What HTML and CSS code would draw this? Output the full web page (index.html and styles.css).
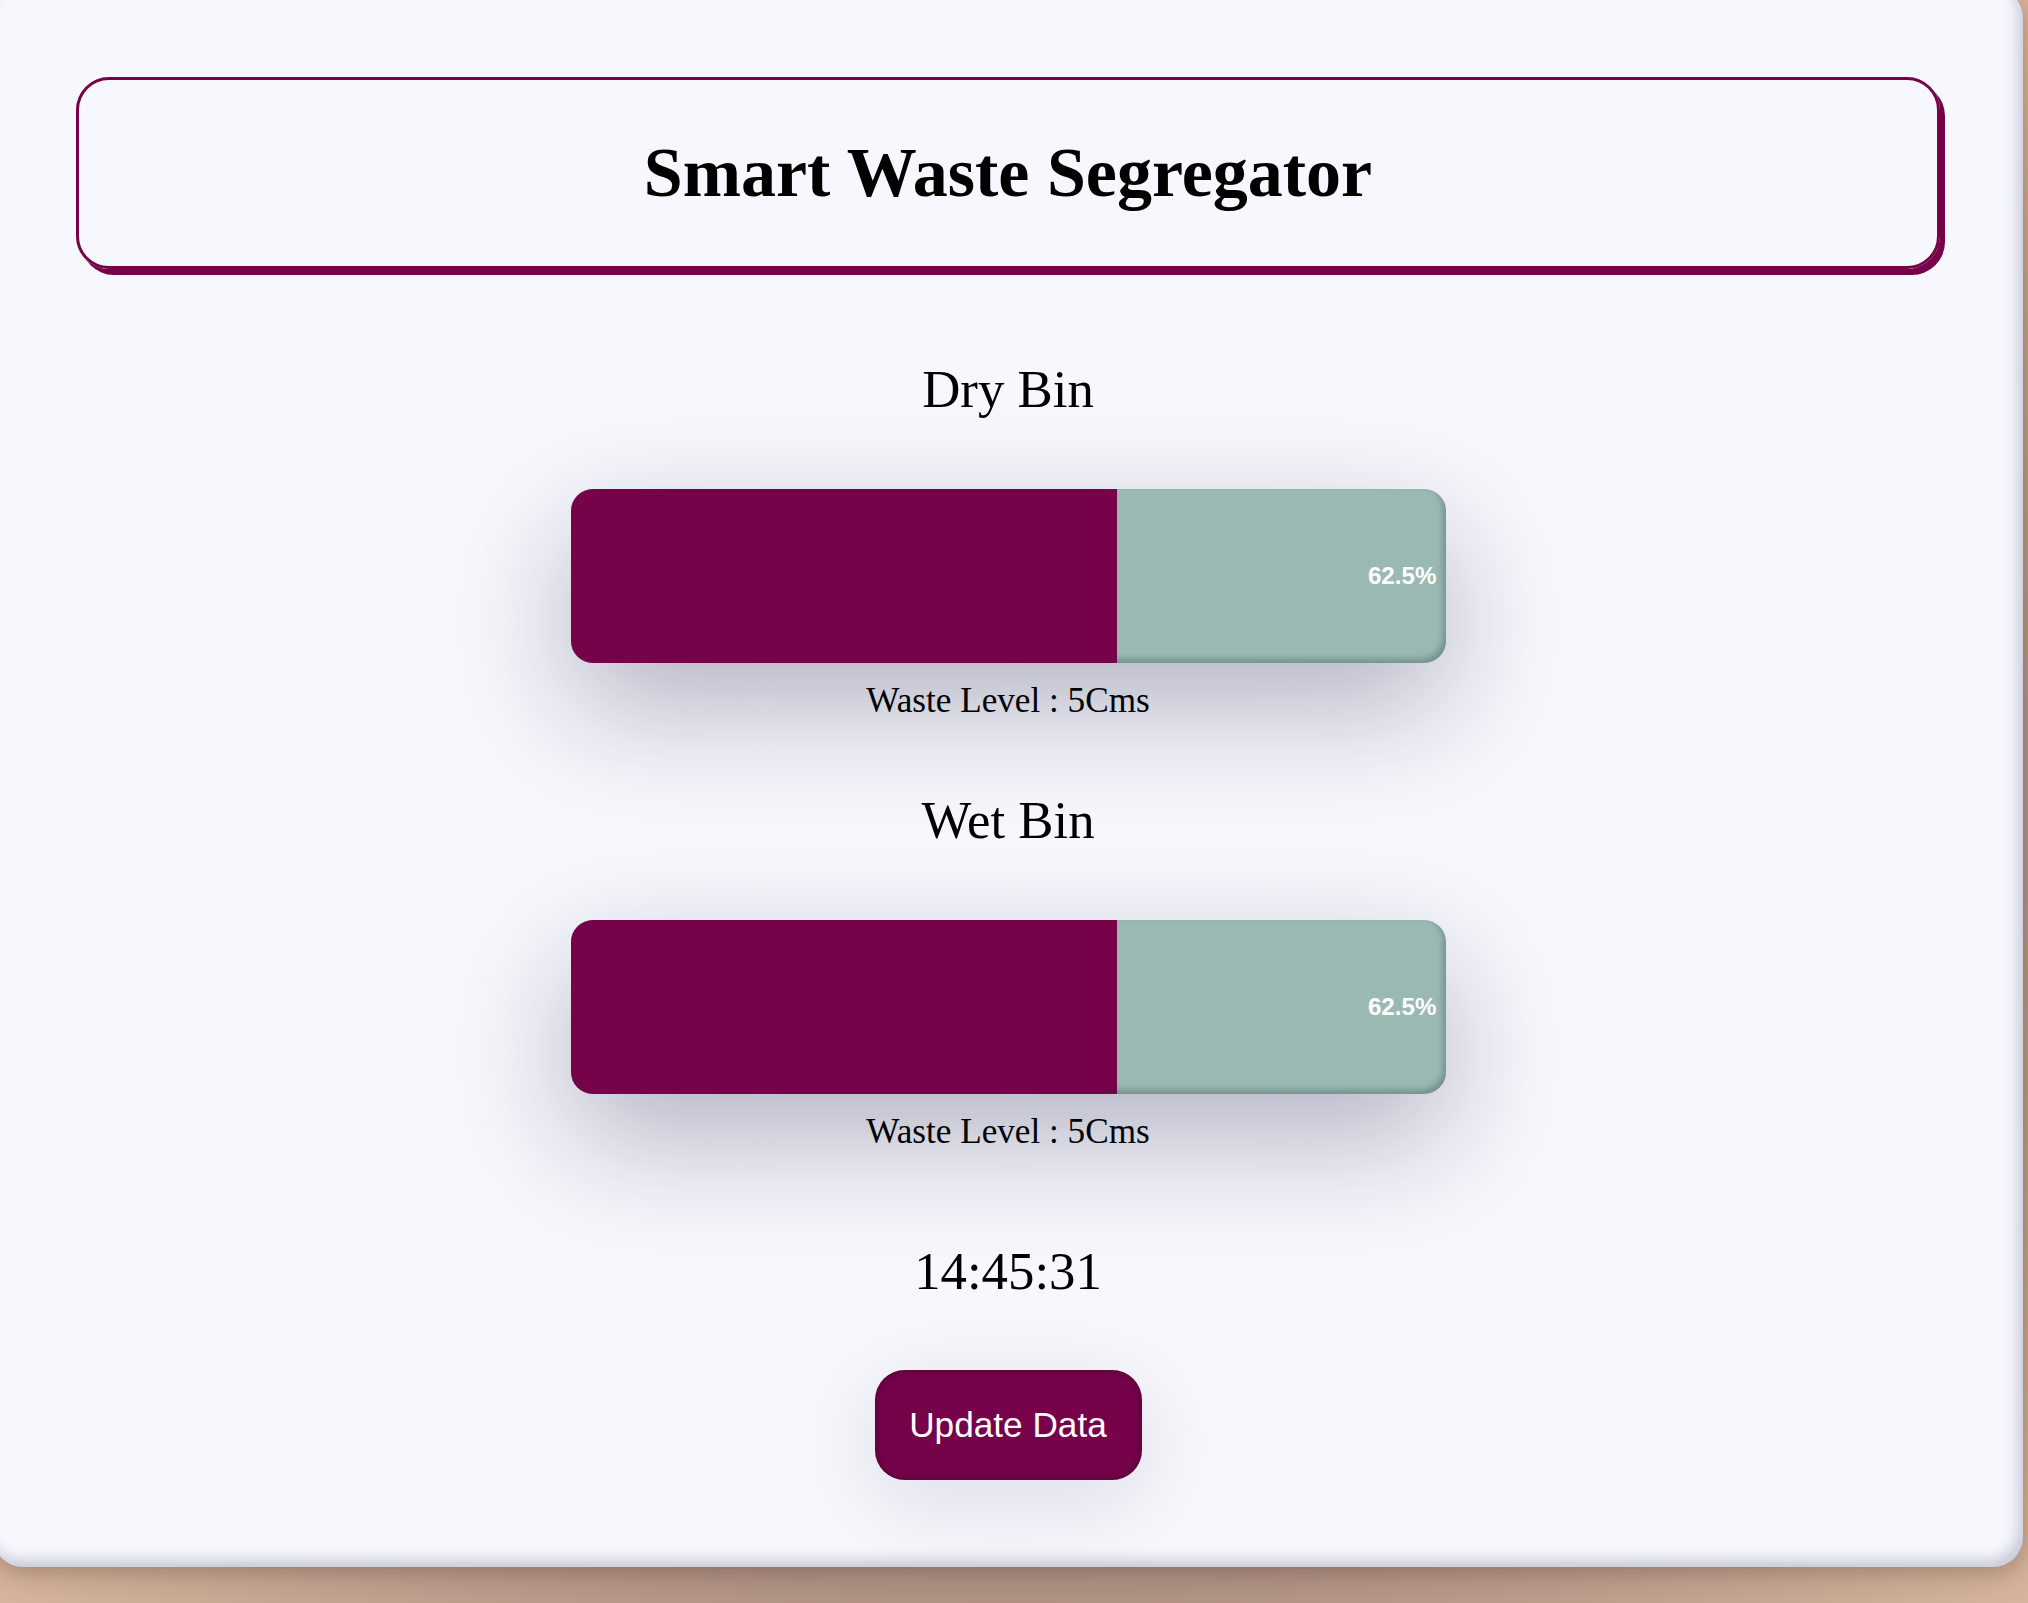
FILE: index.html
```html
<!DOCTYPE html>
<html lang="en">
<head>
<meta charset="utf-8">
<title>Smart Waste Segregator</title>
<link rel="stylesheet" href="styles.css">
</head>
<body>
<div class="app">
  <header class="title-box">
    <h1 class="title">Smart Waste Segregator</h1>
  </header>

  <section class="bin">
    <h2 class="bin-name">Dry Bin</h2>
    <div class="bar">
      <div class="bar-fill" style="width: 62.5%"></div>
      <div class="bar-rest"><span class="bar-pct">62.5%</span></div>
    </div>
    <p class="level">Waste Level : 5Cms</p>
  </section>

  <section class="bin bin-second">
    <h2 class="bin-name">Wet Bin</h2>
    <div class="bar">
      <div class="bar-fill" style="width: 62.5%"></div>
      <div class="bar-rest"><span class="bar-pct">62.5%</span></div>
    </div>
    <p class="level">Waste Level : 5Cms</p>
  </section>

  <div class="clock">14:45:31</div>

  <button class="update-btn" type="button">Update Data</button>
</div>
</body>
</html>
```

FILE: styles.css
```css
html {
  height: 100%;
  background: radial-gradient(ellipse farthest-corner at 50% 50%, #a98c7f 0%, #ad9183 70%, #d6b49c 100%);
}

body {
  margin: 0;
  height: 100%;
  overflow: hidden;
  font-family: "Liberation Serif", "Times New Roman", serif;
  color: #000;
}

.app {
  box-sizing: border-box;
  width: 2030px;
  height: 1579px;
  margin: -12px 0 0 -7px;
  padding: 89px 83px 0;
  background: #f7f8fd;
  border-radius: 30px;
  box-shadow:
    inset -5px -7px 14px rgba(70, 80, 120, 0.28),
    0 6px 22px rgba(60, 30, 20, 0.28);
  display: flex;
  flex-direction: column;
  align-items: center;
}

.title-box {
  box-sizing: border-box;
  width: 100%;
  height: 192px;
  padding: 51px 0;
  border: 3px solid #76034a;
  border-radius: 33px;
  box-shadow: 5px 6px 0 #76034a;
  text-align: center;
}

.title {
  margin: 0;
  font-size: 70px;
  line-height: 84px;
  font-weight: bold;
}

.bin {
  display: flex;
  flex-direction: column;
  align-items: center;
}

.bin-name {
  margin: 88.5px 0 0;
  font-size: 52.8px;
  line-height: 63px;
  font-weight: normal;
}

.bin-second .bin-name {
  margin-top: 67.5px;
}

.bar {
  display: flex;
  width: 875px;
  height: 174px;
  margin-top: 68px;
  border-radius: 22px;
  overflow: hidden;
  background: #9bb9b3;
  box-shadow:
    inset -3px -4px 6px rgba(40, 70, 70, 0.35),
    0 45px 120px rgba(20, 20, 60, 0.3);
}

.bar-fill {
  flex: none;
  height: 100%;
  background: #76034a;
}

.bar-rest {
  flex: 1;
  display: flex;
  align-items: center;
  justify-content: flex-end;
  padding-right: 9px;
}

.bar-pct {
  font-family: "Liberation Sans", Arial, sans-serif;
  font-weight: bold;
  font-size: 24.2px;
  color: #ffffff;
}

.level {
  margin: 17px 0 0;
  font-size: 35.2px;
  line-height: 42px;
}

.clock {
  margin-top: 86.5px;
  font-size: 52.8px;
  line-height: 63px;
}

.update-btn {
  margin-top: 67px;
  width: 267px;
  height: 110px;
  padding: 0;
  border: none;
  border-radius: 30px;
  background: #76034a;
  color: #ffffff;
  font-family: "Liberation Sans", Arial, sans-serif;
  font-size: 35.2px;
  box-shadow:
    inset 0 0 8px rgba(40, 0, 30, 0.55),
    0 20px 90px rgba(20, 20, 60, 0.12);
  cursor: pointer;
}
```
